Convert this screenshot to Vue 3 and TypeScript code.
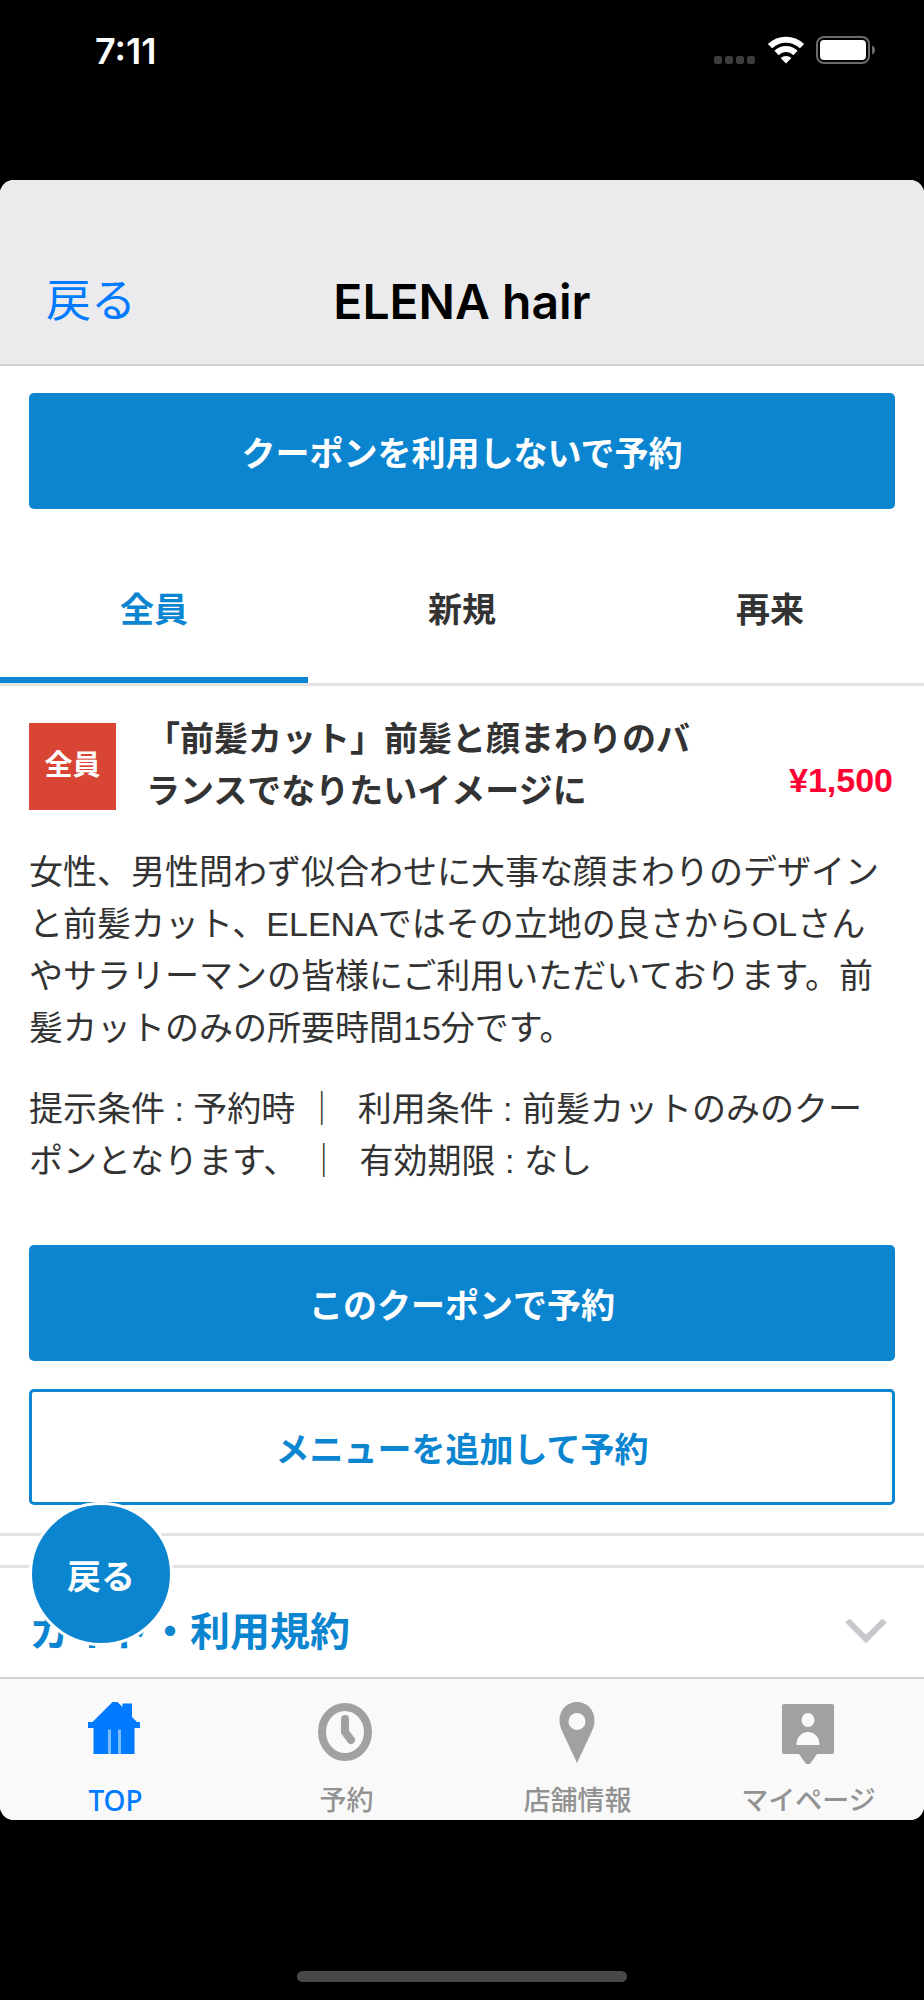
<script setup lang="ts">
import { ref } from 'vue'

const tabs: string[] = ['全員', '新規', '再来']
const activeTab = ref<number>(0)

type NavIcon = 'home' | 'clock' | 'pin' | 'person'
interface NavItem {
  label: string
  icon: NavIcon
}
const navItems: NavItem[] = [
  { label: 'TOP', icon: 'home' },
  { label: '予約', icon: 'clock' },
  { label: '店舗情報', icon: 'pin' },
  { label: 'マイページ', icon: 'person' },
]
const activeNav = ref<NavIcon>('home')
</script>

<template>
  <div class="screen">
    <div class="status">
      <span class="time">7:11</span>
      <div class="indicators">
        <svg class="dots" width="42" height="8" viewBox="0 0 42 8" aria-hidden="true">
          <rect v-for="i in 4" :key="i" :x="(i - 1) * 11" y="0" width="8" height="8" rx="2.5" fill="#3c3c3c" />
        </svg>
        <svg class="wifi" width="38" height="28" viewBox="0 0 38 28" aria-hidden="true">
          <g fill="none" stroke="#fff" stroke-width="6">
            <path d="M3 10.200a23 23 0 0 1 32 0" />
            <path d="M9.500 17a13.500 13.500 0 0 1 19 0" />
          </g>
          <path d="M19 27.600l-5.400-5.600a8 8 0 0 1 10.800 0z" fill="#fff" />
        </svg>
        <svg class="battery" width="60" height="28" viewBox="0 0 60 28" aria-hidden="true">
          <rect x="1" y="1" width="52" height="26" rx="7" fill="none" stroke="#6b6b6b" stroke-width="2" />
          <rect x="4" y="4" width="46" height="20" rx="4" fill="#fff" />
          <path d="M56 9.500c4 1.500 4 7.500 0 9z" fill="#6b6b6b" />
        </svg>
      </div>
    </div>

    <div class="sheet">
      <header class="header">
        <a class="back" href="#">戻る</a>
        <h1 class="title">ELENA hair</h1>
      </header>

      <main class="content">
        <div class="lead">
          <button class="btn primary" type="button">クーポンを利用しないで予約</button>
        </div>

        <div class="tabs" role="tablist">
          <button
            v-for="(tab, i) in tabs"
            :key="tab"
            class="tab"
            :class="{ active: i === activeTab }"
            type="button"
            role="tab"
            :aria-selected="i === activeTab"
            @click="activeTab = i"
          >
            {{ tab }}
          </button>
        </div>

        <article class="coupon">
          <div class="summary">
            <span class="badge">全員</span>
            <h2 class="name">「前髪カット」前髪と顔まわりのバランスでなりたいイメージに</h2>
            <span class="price">¥1,500</span>
          </div>
          <p class="text">女性、男性問わず似合わせに大事な顔まわりのデザインと前髪カット、ELENAではその立地の良さからOLさんやサラリーマンの皆様にご利用いただいております。前髪カットのみの所要時間15分です。</p>
          <p class="text">提示条件 : 予約時 ｜&nbsp; 利用条件 : 前髪カットのみのクー<br />ポンとなります、 ｜&nbsp; 有効期限 : なし</p>
          <div class="actions">
            <button class="btn primary" type="button">このクーポンで予約</button>
            <button class="btn outline" type="button">メニューを追加して予約</button>
          </div>
        </article>

        <button class="guide" type="button">
          <span>ガイド・利用規約</span>
          <svg width="42" height="26" viewBox="0 0 42 26" aria-hidden="true">
            <path d="M2.500 1.500L21 20L39.500 1.500" fill="none" stroke="#c7c7cc" stroke-width="6" />
          </svg>
        </button>
      </main>

      <nav class="nav">
        <a
          v-for="item in navItems"
          :key="item.icon"
          class="nav-item"
          :class="{ active: item.icon === activeNav }"
          href="#"
          @click.prevent="activeNav = item.icon"
        >
          <svg class="nav-icon" width="64" height="64" viewBox="1 -1 64 64" aria-hidden="true">
            <template v-if="item.icon === 'home'">
              <path d="M29.500 0h5l5 5V1.500h9.500V15l5 5h3v6h-5.500v26h-41V26H5v-6h4.500z" fill="currentColor" />
              <path d="M26.500 52V27.500M36.500 52V27.500" fill="none" stroke="#7dbbff" stroke-width="3" />
            </template>
            <template v-else-if="item.icon === 'clock'">
              <ellipse cx="31" cy="30" rx="23" ry="25" fill="none" stroke="currentColor" stroke-width="8" />
              <path d="M31 17v13l6 8" fill="none" stroke="currentColor" stroke-width="8" stroke-linecap="round" />
            </template>
            <path
              v-else-if="item.icon === 'pin'"
              fill="currentColor"
              fill-rule="evenodd"
              d="M32 0c10 0 17.500 8 17.500 18 0 4-1 8-3 12L32 61 17.500 30c-2-4-3-8-3-12C14.500 8 22 0 32 0zm0 11a8.500 8.500 0 1 0 0 17a8.500 8.500 0 1 0 0-17z"
            />
            <path
              v-else
              fill="currentColor"
              fill-rule="evenodd"
              d="M8 2h48a2 2 0 0 1 2 2v46a2 2 0 0 1-2 2H41l-7 10h-4l-7-10H8a2 2 0 0 1-2-2V4a2 2 0 0 1 2-2zm24 9a6.500 7 0 1 0 0 14a6.500 7 0 1 0 0-14zM20.500 43h23c0-8-5-13-11.500-13s-11.500 5-11.500 13z"
            />
          </svg>
          <span>{{ item.label }}</span>
        </a>
      </nav>

      <button class="float" type="button">戻る</button>
    </div>

    <div class="home"><span class="home-bar"></span></div>
  </div>
</template>

<style>
body {
  background: #000;
}
</style>

<style scoped>
.screen {
  display: flex;
  flex-direction: column;
  min-height: 100vh;
  background: #000;
  font-family: 'Liberation Sans', 'Noto Sans CJK JP', sans-serif;
  color: #333;
}
.screen button {
  font-family: inherit;
  border: 0;
  margin: 0;
  padding: 0;
  cursor: pointer;
}
.status {
  display: flex;
  justify-content: space-between;
  align-items: flex-start;
  height: 180px;
  box-sizing: border-box;
  padding: 32px 48px 0 95px;
}
.time {
  font: 600 36px/38px Inter, sans-serif;
  color: #fff;
}
.indicators {
  display: flex;
  align-items: flex-end;
  gap: 11px;
  padding-top: 4px;
}
.sheet {
  position: relative;
  display: flex;
  flex-direction: column;
  overflow: hidden;
  border-radius: 14px;
  background: #fff;
}
.header {
  display: grid;
  grid-template-columns: 1fr auto 1fr;
  align-items: center;
  height: 186px;
  box-sizing: border-box;
  padding: 60px 46px 0;
  background: #ebebed;
  border-bottom: 2px solid #d0d0d2;
}
.back {
  font-size: 45px;
  line-height: 60px;
  color: #007aff;
  text-decoration: none;
}
.title {
  margin: 0;
  font: 600 48px/60px Inter, sans-serif;
  color: #000;
}
.btn {
  display: block;
  width: 100%;
  height: 116px;
  border-radius: 5px;
  font-size: 34px;
  font-weight: 700;
}
.primary {
  background: #0c85d0;
  color: #fff;
}
.screen .outline {
  background: #fff;
  color: #0c85d0;
  border: 3px solid #0c85d0;
}
.lead {
  padding: 27px 29px 28px;
}
.tabs {
  display: grid;
  grid-template-columns: repeat(3, 1fr);
  border-bottom: 3px solid #e3e3e3;
}
.screen .tab {
  height: 146px;
  background: none;
  border-bottom: 6px solid transparent;
  font-size: 34px;
  font-weight: 700;
  color: #333;
}
.screen .tab.active {
  color: #0c85d0;
  border-bottom-color: #0c85d0;
}
.coupon {
  padding: 27px 29px 28px;
  border-bottom: 3px solid #e3e3e3;
}
.summary {
  display: flex;
  align-items: flex-start;
}
.badge {
  flex: none;
  width: 87px;
  height: 87px;
  margin: 10px 30px 0 0;
  background: #d84535;
  color: #fff;
  font-size: 28px;
  font-weight: 700;
  line-height: 86px;
  text-align: center;
}
.name {
  flex: 1;
  margin: 0;
  font-size: 34px;
  line-height: 52px;
}
.price {
  width: 190px;
  box-sizing: border-box;
  padding-right: 2px;
  margin-top: 41px;
  text-align: right;
  font-size: 34px;
  font-weight: 700;
  line-height: 52px;
  color: #ff0033;
}
.text {
  margin: 29px 0 0;
  font-size: 34px;
  line-height: 52px;
}
.actions {
  display: grid;
  gap: 28px;
  margin-top: 58px;
}
.guide {
  display: flex;
  align-items: center;
  justify-content: space-between;
  width: 100%;
  background: #fff;
  color: #0c85d0;
  font-size: 40px;
  font-weight: 700;
  line-height: 60px;
}
.screen .guide {
  margin-top: 29px;
  padding: 34px 37px 15px 30px;
  border-top: 3px solid #e3e3e3;
}
.nav {
  display: grid;
  grid-template-columns: repeat(4, 1fr);
  padding: 22px 0 4px;
  border-top: 2px solid #d2d2d4;
  background: #f9f9f9;
}
.nav-item {
  display: flex;
  flex-direction: column;
  align-items: center;
  gap: 19px;
  color: #929292;
  text-decoration: none;
  font: 500 27px/32px 'Noto Sans', 'Noto Sans CJK JP', sans-serif;
}
.nav-icon {
  color: #a1a1a1;
}
.nav-item.active,
.nav-item.active .nav-icon {
  color: #007aff;
}
.nav-item.active {
  font-size: 28px;
}
.screen .float {
  position: absolute;
  left: 29px;
  bottom: 174px;
  width: 144px;
  height: 144px;
  border: 3px solid #fff;
  border-radius: 50%;
  background: #0c85d0;
  color: #fff;
  font-size: 34px;
  font-weight: 700;
}
.home {
  display: flex;
  flex: 1;
  align-items: flex-end;
  justify-content: center;
  min-height: 120px;
  padding-bottom: 18px;
}
.home-bar {
  width: 330px;
  height: 11px;
  border-radius: 6px;
  background: #484848;
}
</style>
